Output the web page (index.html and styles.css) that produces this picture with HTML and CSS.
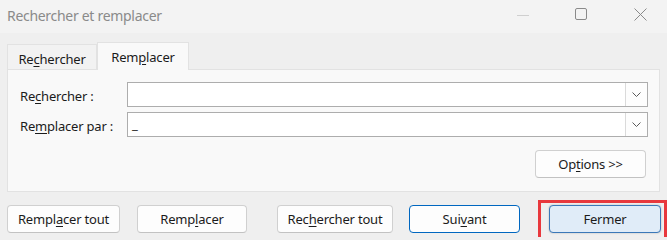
FILE: index.html
```html
<!DOCTYPE html>
<html lang="fr">
<head>
    <meta charset="UTF-8">
    <title>Rechercher et remplacer</title>
    <link rel="stylesheet" href="styles.css">
</head>
<body>
    <div class="window">
        <div class="titlebar">
            <span class="title">Rechercher et remplacer</span>
            <div class="controls">
                <span class="ctrl ctrl-min">
                    <svg width="12" height="12" viewBox="0 0 12 12"><path d="M0 6.5h12" stroke="#cfcfcf" stroke-width="1"/></svg>
                </span>
                <span class="ctrl ctrl-max">
                    <svg width="13" height="13" viewBox="0 0 13 13"><rect x="0.5" y="0.5" width="11" height="11" rx="1.5" fill="none" stroke="#8a8a8a" stroke-width="1"/></svg>
                </span>
                <span class="ctrl ctrl-close">
                    <svg width="13" height="13" viewBox="0 0 13 13"><path d="M0.5 0.5l12 12M12.5 0.5l-12 12" stroke="#8a8a8a" stroke-width="1"/></svg>
                </span>
            </div>
        </div>

        <div class="dialog">
            <div class="tabs">
                <div class="tab">Re<u>c</u>hercher</div>
                <div class="tab tab-active">Rem<u>p</u>lacer</div>
            </div>

            <div class="panel">
                <div class="field-row">
                    <label class="field-label">Re<u>c</u>hercher :</label>
                    <div class="combo">
                        <span class="combo-text"></span>
                        <span class="combo-arrow">
                            <svg width="9" height="5" viewBox="0 0 9 5"><path d="M0.5 0.5l4 4 4-4" fill="none" stroke="#5a5a5a" stroke-width="1"/></svg>
                        </span>
                    </div>
                </div>
                <div class="field-row">
                    <label class="field-label">Re<u>m</u>placer par :</label>
                    <div class="combo">
                        <span class="combo-text">_</span>
                        <span class="combo-arrow">
                            <svg width="9" height="5" viewBox="0 0 9 5"><path d="M0.5 0.5l4 4 4-4" fill="none" stroke="#5a5a5a" stroke-width="1"/></svg>
                        </span>
                    </div>
                </div>
                <div class="options-row">
                    <button class="btn btn-options">Op<u>t</u>ions &gt;&gt;</button>
                </div>
            </div>

            <div class="actions">
                <button class="btn btn-replace-all">Rempl<u>a</u>cer tout</button>
                <button class="btn btn-replace">Remp<u>l</u>acer</button>
                <button class="btn btn-find-all">Rec<u>h</u>ercher tout</button>
                <button class="btn btn-next">Sui<u>v</u>ant</button>
                <div class="highlight">
                    <button class="btn btn-close">Fermer</button>
                </div>
            </div>
        </div>
    </div>
</body>
</html>
```

FILE: styles.css
```css
* {
    margin: 0;
    padding: 0;
    box-sizing: border-box;
}

body {
    font-family: "Noto Sans", "Open Sans", sans-serif;
    font-size: 13px;
    letter-spacing: -0.2px;
    color: #1b1b1b;
    background: #efefef;
    width: 667px;
    height: 240px;
    overflow: hidden;
}

u {
    text-decoration: underline;
    text-underline-offset: 2px;
}

.titlebar {
    height: 33px;
    background: #f3f3f3;
    display: flex;
    align-items: center;
    justify-content: space-between;
    padding-left: 7px;
}

.title {
    font-size: 14px;
    letter-spacing: -0.3px;
    color: #8a8a8a;
    margin-top: -3px;
}

.controls {
    display: flex;
    align-items: center;
    height: 100%;
}

.ctrl {
    display: flex;
    align-items: center;
    justify-content: center;
    height: 100%;
    margin-top: -5px;
}

.ctrl-min {
    width: 12px;
    margin-right: 46px;
    margin-top: -3px;
}

.ctrl-max {
    width: 13px;
    margin-right: 46px;
}

.ctrl-close {
    width: 13px;
    margin-right: 20px;
}

.dialog {
    padding: 9px 0 0 7px;
}

.tabs {
    display: flex;
    align-items: flex-end;
    height: 27px;
}

.tab {
    height: 25px;
    width: 90px;
    border: 1px solid #e2e2e2;
    border-bottom: none;
    background: #f2f2f2;
    display: flex;
    align-items: center;
    justify-content: center;
    padding-top: 4px;
}

.tab-active {
    height: 28px;
    width: 92px;
    background: #f9f9f9;
    margin-bottom: -1px;
    position: relative;
    z-index: 1;
    padding-top: 0;
}

.panel {
    width: 653px;
    height: 123px;
    border: 1px solid #e2e2e2;
    background: #f9f9f9;
    padding: 12px 11px 0 12px;
}

.field-row {
    display: flex;
    align-items: center;
    height: 25px;
    margin-bottom: 5px;
}

.field-label {
    width: 107px;
    padding-top: 2px;
}

.combo {
    width: 521px;
    height: 25px;
    border: 1px solid #adadad;
    background: #fff;
    display: flex;
    align-items: stretch;
}

.combo-text {
    flex: 1;
    padding-left: 4px;
    line-height: 22px;
}

.combo-arrow {
    width: 22px;
    border-left: 1px solid #dadada;
    background: #fdfdfd;
    display: flex;
    align-items: center;
    justify-content: center;
}

.options-row {
    display: flex;
    justify-content: flex-end;
    padding-right: 2px;
    margin-top: 13px;
}

.btn {
    font-family: inherit;
    font-size: 13px;
    letter-spacing: -0.2px;
    color: #1b1b1b;
    height: 28px;
    background: #fdfdfd;
    border: 1px solid #d0d0d0;
    border-bottom-color: #c2c2c2;
    border-radius: 4px;
    cursor: pointer;
    flex-shrink: 0;
}

.btn-options {
    width: 111px;
}

.actions {
    display: flex;
    align-items: flex-start;
    margin-top: 13px;
}

.highlight {
    flex-shrink: 0;
    margin-top: -5px;
    margin-left: 18px;
    border: 3px solid #e8383d;
    border-bottom: none;
    padding: 2px 3px 4px 8px;
}

.btn-replace-all {
    width: 113px;
}

.btn-replace {
    width: 110px;
    margin-left: 17px;
}

.btn-find-all {
    width: 116px;
    margin-left: 30px;
}

.btn-next {
    width: 111px;
    margin-left: 16px;
    border: 1px solid #0067c0;
}

.btn-close {
    width: 112px;
    background: #e0ecf8;
    border: 1px solid #3b78b8;
    box-shadow: 0 0 2px rgba(0, 0, 0, 0.25);
}
```
